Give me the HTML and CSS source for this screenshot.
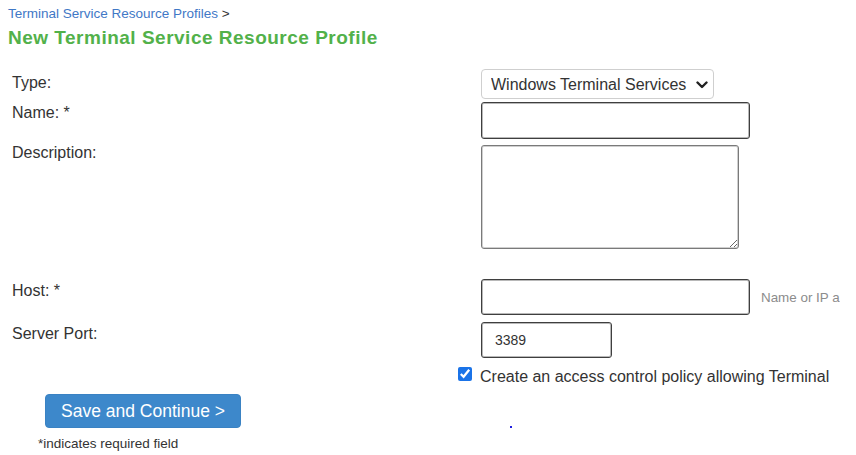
FILE: index.html
```html
<!DOCTYPE html>
<html lang="en">
<head>
<meta charset="utf-8">
<title>New Terminal Service Resource Profile</title>
<link rel="stylesheet" href="styles.css">
</head>
<body>
<div class="page">
  <div class="crumb"><a class="crumb-link" href="#">Terminal Service Resource Profiles</a> <span class="crumb-sep">&gt;</span></div>
  <h1 class="title">New Terminal Service Resource Profile</h1>

  <form class="form">
    <div class="row row-type">
      <label class="label label-type">Type:</label>
      <div class="select-wrap">
        <select class="select">
          <option>Windows Terminal Services</option>
        </select>
        <svg class="chevron" width="12" height="8" viewBox="0 0 12 8"><path d="M1.5 1.5 L6 6 L10.5 1.5" fill="none" stroke="#222" stroke-width="2.4" stroke-linecap="round" stroke-linejoin="round"/></svg>
      </div>
    </div>

    <div class="row row-name">
      <label class="label label-name">Name: *</label>
      <input class="input input-wide input-name" type="text">
    </div>

    <div class="row row-desc">
      <label class="label label-desc">Description:</label>
      <textarea class="textarea"></textarea>
    </div>

    <div class="row row-host">
      <label class="label label-host">Host: *</label>
      <input class="input input-wide" type="text">
      <span class="hint">Name or IP a</span>
    </div>

    <div class="row row-port">
      <label class="label label-port">Server Port:</label>
      <input class="input input-port" type="text" value="3389">
    </div>

    <div class="row row-check">
      <span class="label"></span>
      <input class="checkbox" type="checkbox" checked>
      <span class="check-text">Create an access control policy allowing Terminal</span>
    </div>

    <div class="actions">
      <button class="btn" type="button">Save and Continue &gt;</button>
      <span class="dot"></span>
    </div>
    <div class="note">*indicates required field</div>
  </form>
</div>
</body>
</html>
```

FILE: styles.css
```css
html, body {
  margin: 0;
  padding: 0;
  background: #fff;
  overflow: hidden;
}

body {
  font-family: "Liberation Sans", Arial, sans-serif;
  color: #333;
  width: 856px;
  height: 455px;
}

.page {
  width: 832px;
  padding: 6px 0 0 8px;
  overflow: hidden;
  height: 449px;
}

.crumb {
  font-size: 13.5px;
  line-height: 16px;
  white-space: nowrap;
}

.crumb-link {
  color: #3f78c6;
  text-decoration: none;
}

.crumb-sep {
  color: #333;
}

.title {
  margin: 5px 0 0;
  font-size: 19px;
  line-height: 22px;
  font-weight: bold;
  letter-spacing: 0.5px;
  color: #52b14a;
  white-space: nowrap;
}

.form {
  margin: 20px 0 0;
  padding-left: 4px;
}

.row {
  display: flex;
  align-items: flex-start;
  white-space: nowrap;
}

.label {
  flex: none;
  width: 469px;
  font-size: 16px;
  line-height: 18px;
  color: #333;
}

.row-type { margin-bottom: 3px; }
.label-type { padding-top: 5px; }

.row-name { margin-bottom: 4px; }
.label-name { padding-top: 2px; }

.row-desc { margin-bottom: 30px; }
.label-desc { padding-top: 1px; }

.row-host { margin-bottom: 7px; }
.label-host { padding-top: 3px; }

.label-port { padding-top: 3px; }

.select-wrap {
  position: relative;
  flex: none;
  width: 233px;
  height: 30px;
}

.select {
  appearance: none;
  -webkit-appearance: none;
  box-sizing: border-box;
  width: 233px;
  height: 30px;
  margin: 0;
  padding: 0 0 0 9px;
  border: 1px solid #cfcfcf;
  border-radius: 4px;
  background: #fff;
  font-family: "Liberation Sans", Arial, sans-serif;
  font-size: 16px;
  color: #333;
}

.chevron {
  position: absolute;
  left: 215px;
  top: 12px;
  pointer-events: none;
}

.input {
  flex: none;
  box-sizing: border-box;
  margin: 0;
  border: 1px solid #3f3f3f;
  box-shadow: inset 0 0 0 1px #b8b8b8;
  border-radius: 3px;
  background: #fff;
  font-family: "Liberation Sans", Arial, sans-serif;
  font-size: 14px;
  color: #333;
  outline: none;
}

.input-wide {
  width: 269px;
  height: 36px;
}

.input-name {
  height: 37px;
}

.input-port {
  width: 131px;
  height: 36px;
  padding: 0 0 0 13px;
}

.textarea {
  flex: none;
  box-sizing: border-box;
  margin: 2px 0 0;
  width: 258px;
  height: 104px;
  border: 1px solid #7a7a7a;
  box-shadow: inset 0 0 0 1px #cfcfcf;
  border-radius: 3px;
  font-family: "Liberation Sans", Arial, sans-serif;
  font-size: 14px;
  outline: none;
}

.hint {
  margin-left: 11px;
  padding-top: 11px;
  font-size: 13.4px;
  line-height: 16px;
  color: #8c8c8c;
}

.row-check {
  margin-top: 9px;
}

.checkbox {
  flex: none;
  width: 14px;
  height: 14px;
  margin: 0 0 0 -23px;
  accent-color: #1a73e8;
}

.check-text {
  margin-left: 8px;
  margin-top: 1px;
  font-size: 16px;
  line-height: 18px;
  color: #333;
}

.actions {
  display: flex;
  align-items: flex-end;
  margin: 8px 0 0 33px;
}

.btn {
  flex: none;
  width: 196px;
  height: 34px;
  margin: 0;
  padding: 0;
  border: 1px solid #3a82c3;
  border-radius: 4px;
  background: #3d88cb;
  color: #fff;
  font-family: "Liberation Sans", Arial, sans-serif;
  font-size: 17.5px;
  line-height: 20px;
  cursor: pointer;
}

.dot {
  width: 2px;
  height: 2px;
  margin: 0 0 0 269px;
  background: #1f1fe0;
}

.note {
  margin: 8px 0 0 26px;
  font-size: 13.5px;
  line-height: 16px;
  color: #333;
}
```
